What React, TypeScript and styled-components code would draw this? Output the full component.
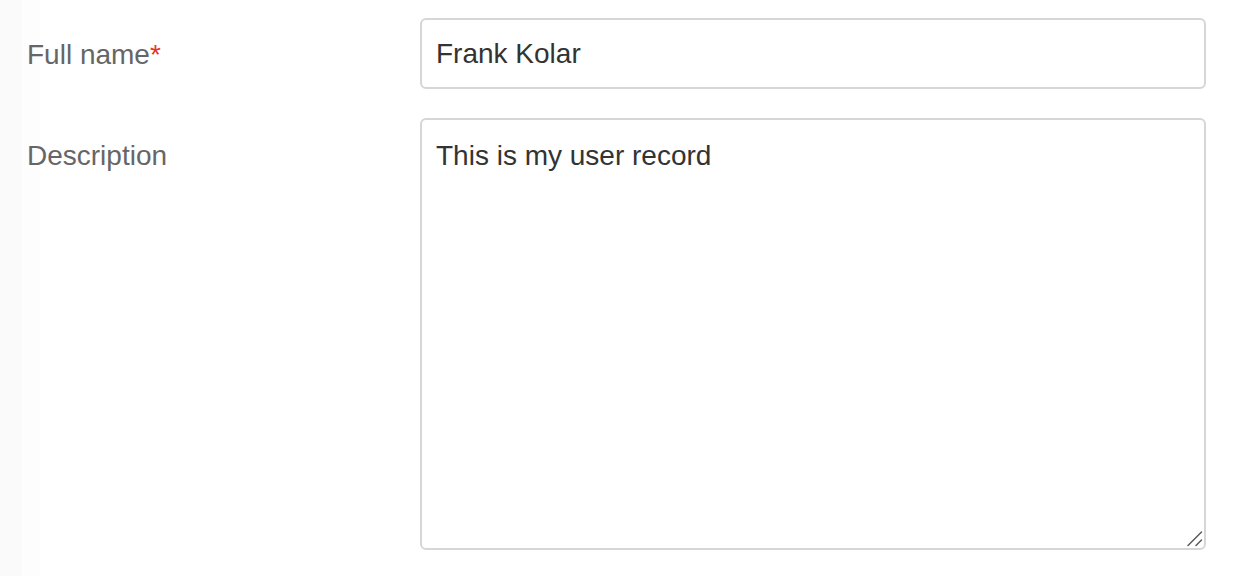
import React, { useState } from 'react';
import styled, { createGlobalStyle } from 'styled-components';

const GlobalStyle = createGlobalStyle`
  html, body {
    margin: 0;
    padding: 0;
    background: #fff;
  }
  body {
    font-family: "Liberation Sans", Arial, Helvetica, sans-serif;
  }
`;

const Page = styled.div`
  min-height: 100vh;
  box-sizing: border-box;
  padding: 18px 44px 0 27px;
  background: linear-gradient(
    to right,
    #fafafa 0,
    #fafafa 22px,
    #fdfdfd 22px,
    #fdfdfd 40px,
    #fff 40px
  );
`;

const Form = styled.form`
  display: grid;
  grid-template-columns: 393px 1fr;
  row-gap: 29px;
`;

const Label = styled.label<{ $offset: number }>`
  font-size: 28px;
  line-height: 40px;
  padding-top: ${p => p.$offset}px;
  color: #666;
`;

const Required = styled.span`
  color: #e6352b;
`;

const fieldBase = `
  width: 100%;
  box-sizing: border-box;
  border: 2px solid #d6d6d6;
  border-radius: 6px;
  background: #fff;
  color: #333;
  font-family: "Liberation Sans", Arial, Helvetica, sans-serif;
  font-size: 28px;
  line-height: 40px;
  outline: none;
  margin: 0;
`;

const TextInput = styled.input`
  ${fieldBase}
  height: 71px;
  padding: 0 14px;
`;

const AreaWrap = styled.div`
  position: relative;
`;

const TextArea = styled.textarea`
  ${fieldBase}
  display: block;
  height: 432px;
  padding: 16px 14px;
  resize: none;
`;

const Grip = styled.svg`
  position: absolute;
  right: 3px;
  bottom: 3px;
  width: 18px;
  height: 18px;
  pointer-events: none;
`;

const App = () => {
  const [name, setName] = useState('Frank Kolar');
  const [description, setDescription] = useState('This is my user record');
  return (
    <Page>
      <GlobalStyle />
      <Form onSubmit={e => e.preventDefault()}>
        <Label htmlFor="fullName" $offset={17}>
          Full name<Required>*</Required>
        </Label>
        <TextInput id="fullName" value={name} onChange={e => setName(e.target.value)} />
        <Label htmlFor="description" $offset={18}>Description</Label>
        <AreaWrap>
          <TextArea id="description" value={description} onChange={e => setDescription(e.target.value)} />
          <Grip viewBox="0 0 18 18">
            <path d="M3 16.5 L16.5 3 M11 16.5 L16.5 11" stroke="#5a5a5a" strokeWidth="1.5" strokeLinecap="round" fill="none" />
          </Grip>
        </AreaWrap>
      </Form>
    </Page>
  );
};

export default App;
